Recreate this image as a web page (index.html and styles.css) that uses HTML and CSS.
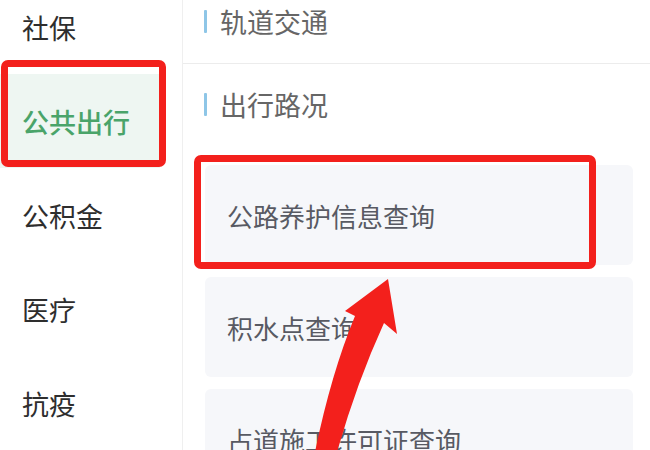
FILE: index.html
```html
<!DOCTYPE html>
<html lang="zh">
<head>
<meta charset="utf-8">
<link rel="stylesheet" href="styles.css">
</head>
<body>
<div class="app">
  <nav class="sidebar">
    <ul class="menu">
      <li class="menu-item">社保</li>
      <li class="menu-item active">公共出行</li>
      <li class="menu-item">公积金</li>
      <li class="menu-item">医疗</li>
      <li class="menu-item">抗疫</li>
    </ul>
  </nav>
  <main class="content">
    <section class="group group-top">
      <h2 class="group-title"><span class="bar"></span>轨道交通</h2>
    </section>
    <section class="group">
      <h2 class="group-title"><span class="bar"></span>出行路况</h2>
      <div class="cards">
        <div class="card">公路养护信息查询</div>
        <div class="card">积水点查询</div>
        <div class="card">占道施工许可证查询</div>
      </div>
    </section>
  </main>
  <div class="mark mark-menu"></div>
  <div class="mark mark-card"></div>
  <svg class="arrow" width="650" height="450" viewBox="0 0 650 450">
    <path d="M388,279 L397,334 L384,323 Q357,382 337,452 L315,452 Q331,374 355,316 L345,311 Z" fill="#f3201c"/>
  </svg>
</div>
</body>
</html>
```
FILE: styles.css
```css
* { box-sizing: border-box; }
html, body {
  margin: 0;
  padding: 0;
  background: #ffffff;
}
body {
  width: 650px;
  height: 450px;
  overflow: hidden;
  font-family: "Noto Sans CJK SC", "Noto Sans", sans-serif;
}
.app {
  position: relative;
  display: flex;
  width: 650px;
  height: 450px;
  overflow: hidden;
}
.sidebar {
  width: 183px;
  flex: none;
  border-right: 1px solid #efefef;
  background: #fff;
}
.menu {
  list-style: none;
  margin: -20px 0 0 0;
  padding: 0;
}
.menu-item {
  height: 94px;
  display: flex;
  align-items: center;
  padding-left: 22px;
  font-size: 27px;
  color: #2e2e2e;
}
.menu-item.active {
  width: 160px;
  color: #4aa46a;
  font-weight: 500;
  background: #eef6f2;
}
.content {
  flex: 1;
  display: flex;
  flex-direction: column;
}
.group {
  flex: none;
}
.group-top {
  height: 64px;
  border-bottom: 1px solid #ececec;
}
.group-title {
  margin: 0;
  height: 42px;
  display: flex;
  align-items: center;
  padding-left: 21px;
  font-size: 27px;
  font-weight: 400;
  color: #666666;
}
.group + .group .group-title {
  margin-top: 20px;
  height: 40px;
}
.bar {
  width: 3px;
  height: 23px;
  background: #8ec6e7;
  margin-right: 13px;
  border-radius: 1px;
}
.cards {
  margin-top: 41px;
  padding: 0 17px 0 22px;
  display: flex;
  flex-direction: column;
  gap: 12px;
}
.card {
  flex: none;
  height: 100px;
  display: flex;
  align-items: center;
  padding-left: 22px;
  background: #f6f7fa;
  border-radius: 6px;
  font-size: 26px;
  color: #585a63;
}
.mark {
  position: absolute;
  border: 7px solid #f3201c;
  border-radius: 7px;
}
.mark-menu {
  left: 1px;
  top: 60px;
  width: 165px;
  height: 107px;
}
.mark-card {
  left: 194px;
  top: 155px;
  width: 402px;
  height: 114px;
}
.arrow {
  position: absolute;
  left: 0;
  top: 0;
}
```
